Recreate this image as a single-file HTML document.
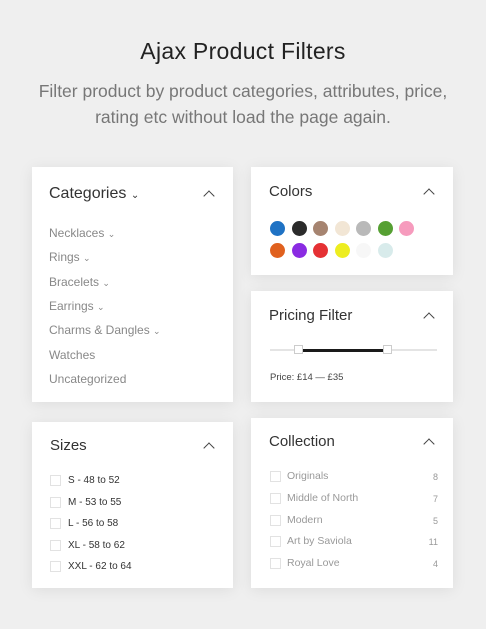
<!DOCTYPE html>
<html><head><meta charset="utf-8"><style>
*{margin:0;padding:0;box-sizing:border-box}
body{width:486px;height:629px;background:#efefef;font-family:"Liberation Sans",sans-serif;position:relative;overflow:hidden}
h1{position:absolute;top:38px;left:0;width:486px;text-align:center;font-size:23px;font-weight:normal;color:#222;letter-spacing:.3px}
.sub{position:absolute;top:78px;left:0;width:486px;text-align:center;font-size:17.5px;color:#777;line-height:26px}
.card{position:absolute;background:#fff;box-shadow:0 2px 14px rgba(0,0,0,.08)}
.t{position:absolute;left:18px;font-size:15px;color:#333}
.car{position:absolute;right:20px;width:8px;height:8px;border-left:1.2px solid #444;border-top:1.2px solid #444;transform:rotate(45deg)}
.li{position:absolute;left:17px;font-size:12px;color:#888}
.v{font-size:9px}
.dot{position:absolute;width:15px;height:15px;border-radius:50%}
.cb{position:absolute;left:18px;width:11px;height:11px;border:1px solid #e2e2e2}
.sl{position:absolute;left:36px;font-size:10px;color:#333}
.cl{position:absolute;left:36px;font-size:10.5px;color:#999}
.n{position:absolute;right:15px;font-size:9px;color:#999}
</style></head><body>
<h1>Ajax Product Filters</h1>
<div class="sub">Filter product by product categories, attributes, price,<br>rating etc without load the page again.</div>

<div class="card" style="left:32px;top:167px;width:201px;height:235px">
<div class="t" style="top:18px;left:17px;font-size:16px">Categories <span style="font-size:10px">⌄</span></div>
<div class="car" style="top:25px"></div>
<div class="li" style="top:59px">Necklaces <span class="v">⌄</span></div>
<div class="li" style="top:83px">Rings <span class="v">⌄</span></div>
<div class="li" style="top:108px">Bracelets <span class="v">⌄</span></div>
<div class="li" style="top:132px">Earrings <span class="v">⌄</span></div>
<div class="li" style="top:156px">Charms &amp; Dangles <span class="v">⌄</span></div>
<div class="li" style="top:181px">Watches</div>
<div class="li" style="top:205px">Uncategorized</div>
</div>

<div class="card" style="left:251px;top:167px;width:202px;height:108px">
<div class="t" style="top:16px">Colors</div>
<div class="car" style="top:23px"></div>
<div class="dot" style="left:19px;top:54px;background:#1f72c4"></div>
<div class="dot" style="left:41px;top:54px;background:#2b2b2b"></div>
<div class="dot" style="left:62px;top:54px;background:#a68470"></div>
<div class="dot" style="left:84px;top:54px;background:#f2e6d5"></div>
<div class="dot" style="left:105px;top:54px;background:#b9b9b9"></div>
<div class="dot" style="left:127px;top:54px;background:#56a033"></div>
<div class="dot" style="left:148px;top:54px;background:#f69bbd"></div>
<div class="dot" style="left:19px;top:76px;background:#e0611f"></div>
<div class="dot" style="left:41px;top:76px;background:#8a2be2"></div>
<div class="dot" style="left:62px;top:76px;background:#e53134"></div>
<div class="dot" style="left:84px;top:76px;background:#eded20"></div>
<div class="dot" style="left:105px;top:76px;background:#f7f7f7"></div>
<div class="dot" style="left:127px;top:76px;background:#d8ebeb"></div>
</div>

<div class="card" style="left:251px;top:291px;width:202px;height:111px">
<div class="t" style="top:16px">Pricing Filter</div>
<div class="car" style="top:23px"></div>
<div style="position:absolute;left:19px;top:58px;width:167px;height:2px;background:#e4e4e4"></div>
<div style="position:absolute;left:48px;top:58px;width:89px;height:3px;background:#1a1a1a"></div>
<div style="position:absolute;left:43px;top:54px;width:9px;height:9px;background:#fff;border:1px solid #ccc"></div>
<div style="position:absolute;left:132px;top:54px;width:9px;height:9px;background:#fff;border:1px solid #ccc"></div>
<div style="position:absolute;left:19px;top:81px;font-size:9.5px;color:#444">Price: £14 — £35</div>
</div>

<div class="card" style="left:32px;top:422px;width:201px;height:166px">
<div class="t" style="top:15px">Sizes</div>
<div class="car" style="top:22px"></div>
<div class="cb" style="top:53px"></div><div class="sl" style="top:53px">S - 48 to 52</div>
<div class="cb" style="top:75px"></div><div class="sl" style="top:75px">M - 53 to 55</div>
<div class="cb" style="top:96px"></div><div class="sl" style="top:96px">L - 56 to 58</div>
<div class="cb" style="top:118px"></div><div class="sl" style="top:118px">XL - 58 to 62</div>
<div class="cb" style="top:139px"></div><div class="sl" style="top:139px">XXL - 62 to 64</div>
</div>

<div class="card" style="left:251px;top:418px;width:202px;height:170px">
<div class="t" style="top:15px">Collection</div>
<div class="car" style="top:22px"></div>
<div class="cb" style="top:53px;left:19px"></div><div class="cl" style="top:52px">Originals</div><div class="n" style="top:54px">8</div>
<div class="cb" style="top:75px;left:19px"></div><div class="cl" style="top:74px">Middle of North</div><div class="n" style="top:76px">7</div>
<div class="cb" style="top:97px;left:19px"></div><div class="cl" style="top:96px">Modern</div><div class="n" style="top:98px">5</div>
<div class="cb" style="top:118px;left:19px"></div><div class="cl" style="top:117px">Art by Saviola</div><div class="n" style="top:119px">11</div>
<div class="cb" style="top:140px;left:19px"></div><div class="cl" style="top:139px">Royal Love</div><div class="n" style="top:141px">4</div>
</div>
</body></html>
